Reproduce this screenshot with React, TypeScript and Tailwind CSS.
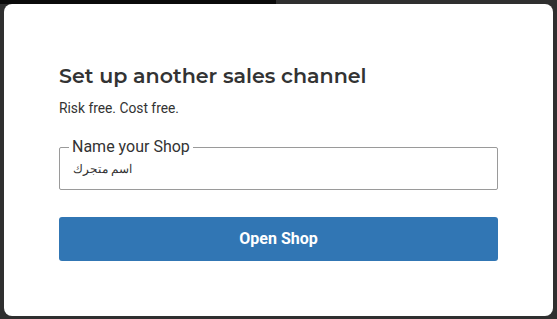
import React from "react";

export default function App() {
  return (
    <div className="relative w-[557px] h-[319px] bg-[#2f2f2f] overflow-hidden p-[4px] pb-[3px]">
      <div className="absolute left-0 top-0 w-[276px] h-[4px] bg-[#0a0a0a]" />
      <div className="relative flex flex-col w-[549px] h-[312px] bg-white rounded-[8px] px-[55px] pt-[59px] font-[Roboto]">
        <h1 className="font-[Montserrat] text-[20.6px] leading-[26px] font-semibold text-[#333333]">
          Set up another sales channel
        </h1>
        <p className="mt-[11px] text-[13.8px] leading-[16px] text-[#333333]">Risk free. Cost free.</p>
        <fieldset className="mt-[23px] h-[51px] border border-[#9a9a9a] rounded-[2px] px-[9px]">
          <legend className="px-[3px] text-[16px] leading-[16px] text-[#333333]">Name your Shop</legend>
          <div className="mt-[5px] pl-[4px] text-[12px] leading-[18px] text-[#333333] text-left">
            <span dir="rtl">اسم متجرك</span>
          </div>
        </fieldset>
        <button className="mt-[27px] w-full h-[44px] rounded-[3px] bg-[#3176b4] text-white text-[16px] font-bold">
          Open Shop
        </button>
      </div>
    </div>
  );
}
